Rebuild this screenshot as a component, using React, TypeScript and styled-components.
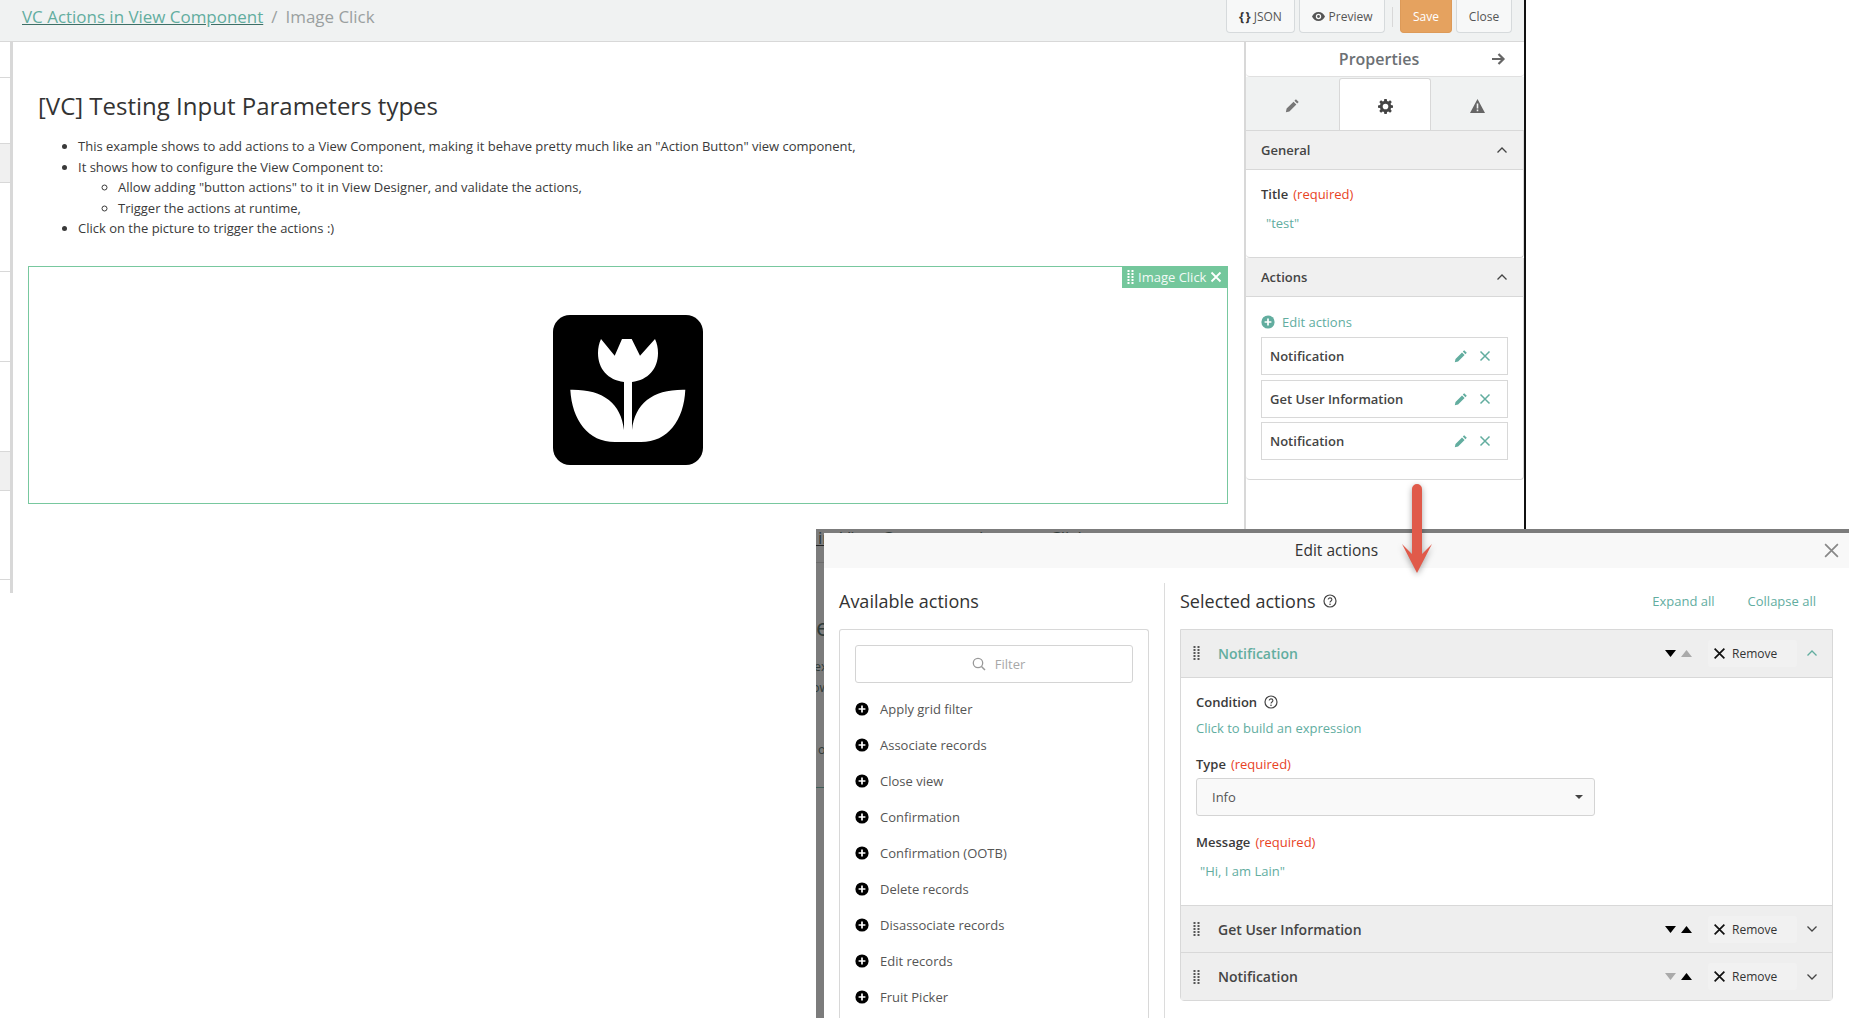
import React from "react";
import styled, { createGlobalStyle } from "styled-components";

const Global = createGlobalStyle`
  html, body { margin: 0; padding: 0; background: #fff; }
  body { font-family: "Open Sans", "Liberation Sans", sans-serif; color: #333; width: 1849px; height: 1018px; overflow: hidden; position: relative; }
  * { box-sizing: border-box; }
`;

const teal = "#62ad9f";
const red = "#e8431f";

const Screen = styled.div`
  width: 1526px;
  height: 593px;
  border-right: 2px solid #111;
  display: flex;
  flex-direction: column;
`;
const Header = styled.header`
  height: 42px;
  flex: none;
  background: #f0f2f2;
  border-bottom: 1px solid #d8d8d8;
  display: flex;
  align-items: flex-start;
  justify-content: space-between;
  padding: 0 12px 0 22px;
`;
const Crumbs = styled.div`
  font-size: 16.95px;
  line-height: 34px;
  color: #9aa0a0;
  display: flex;
  gap: 8px;
`;
const CrumbLink = styled.a`
  color: ${teal};
  text-decoration: underline;
  text-decoration-color: #3d6f66;
`;
const Buttons = styled.div`
  display: flex;
  align-items: center;
  gap: 4px;
  height: 33px;
`;
const Button = styled.button<{ $primary?: boolean; $w: number }>`
  width: ${(p) => p.$w}px;
  height: 33px;
  padding: 0;
  font: 12px "Open Sans", sans-serif;
  color: ${(p) => (p.$primary ? "#fff" : "#555")};
  background: ${(p) => (p.$primary ? "#e5a25f" : "#f7f8f8")};
  border: 1px solid ${(p) => (p.$primary ? "#dd9a58" : "#d6dadc")};
  border-top: none;
  border-radius: 0 0 4px 4px;
  display: flex;
  align-items: center;
  justify-content: center;
  gap: 4px;
`;
const Braces = styled.b`
  letter-spacing: -1px;
  color: #333;
  font-size: 13px;
`;
const Divider = styled.span`
  width: 1px;
  height: 20px;
  background: #d8d8d8;
  margin: 0 3px;
`;
const Body = styled.div`
  flex: 1;
  display: flex;
  min-height: 0;
`;
const RuleStrip = styled.div`
  width: 13px;
  flex: none;
  border-right: 3px solid #d8d8d8;
  display: flex;
  flex-direction: column;
`;
const RuleCell = styled.div<{ $h: number; $fill?: boolean }>`
  height: ${(p) => p.$h}px;
  flex: none;
  border-bottom: 1px solid #d8d8d8;
  background: ${(p) => (p.$fill ? "#f0f0f0" : "transparent")};
`;
const Canvas = styled.main`
  flex: 1;
  min-width: 0;
  padding: 47px 16px 0 15px;
`;
const Title = styled.h1`
  font-size: 24px;
  line-height: 34px;
  font-weight: 400;
  margin: 0 0 13px 10px;
  color: #333;
`;
const Bullets = styled.ul`
  margin: 0 0 0 10px;
  padding: 0 0 0 40px;
  font-size: 13px;
  line-height: 20.6px;
  color: #3a3a3a;
  ul { padding-left: 40px; margin: 0; }
`;
const Frame = styled.section`
  position: relative;
  margin-top: 27px;
  height: 238px;
  border: 1px solid #78c89f;
  display: flex;
  justify-content: center;
  padding-top: 48px;
`;
const Tag = styled.div`
  position: absolute;
  top: -1px;
  right: -1px;
  height: 22px;
  width: 106px;
  background: #74c79c;
  color: #f2faf6;
  font-size: 13px;
  white-space: nowrap;
  display: flex;
  align-items: center;
  gap: 3px;
  padding: 0 6px 0 5px;
`;
const Side = styled.aside`
  width: 280px;
  flex: none;
  border-left: 2px solid #d8d8d8;
  display: flex;
  flex-direction: column;
`;
const SideTitle = styled.div`
  height: 35px;
  display: flex;
  align-items: center;
  justify-content: center;
  position: relative;
  font-size: 16px;
  font-weight: 600;
  color: #6c7074;
  border-bottom: 1px solid #e0e0e0;
  border-radius: 0 0 4px 4px;
  padding-right: 12px;
`;
const SideArrow = styled.span`
  position: absolute;
  right: 18px;
  top: 9px;
  display: flex;
`;
const Tabs = styled.div`
  height: 54px;
  background: #f0f2f2;
  display: flex;
  border-bottom: 1px solid #d8d8d8;
`;
const Tab = styled.div<{ $on?: boolean }>`
  width: ${(p) => (p.$on ? 93 : 93)}px;
  display: flex;
  align-items: center;
  justify-content: center;
  background: ${(p) => (p.$on ? "#fff" : "transparent")};
  border: ${(p) => (p.$on ? "1px solid #d8d8d8" : "none")};
  border-bottom: none;
  border-radius: 3px 3px 0 0;
  margin-top: 1px;
  padding-top: 3px;
`;
const Panel = styled.div`
  border-bottom: 1px solid #d8d8d8;
  border-right: 1px solid #d8d8d8;
  border-radius: 0 0 4px 4px;
`;
const PanelHead = styled.div`
  height: 39px;
  background: #f0f0f0;
  border-bottom: 1px solid #d8d8d8;
  display: flex;
  align-items: center;
  justify-content: space-between;
  padding: 0 15px 0 15px;
  font-size: 13px;
  font-weight: 600;
  color: #444;
`;
const GeneralBody = styled.div`
  height: 87px;
  padding: 14px 15px 0;
`;
const FieldLabel = styled.div`
  font-size: 13px;
  line-height: 20px;
  font-weight: 600;
  color: #3a3a3a;
  display: flex;
  gap: 5px;
  align-items: center;
`;
const Required = styled.span`
  font-weight: 400;
  color: ${red};
`;
const StringValue = styled.div`
  font-size: 13px;
  line-height: 20px;
  color: ${teal};
  margin: 9px 0 0 5px;
`;
const MessageValue = styled(StringValue)`
  margin-top: 10px;
  margin-left: 4px;
`;
const ActionsBody = styled.div`
  padding: 14px 15px 19px;
`;
const EditActions = styled.div`
  display: flex;
  align-items: center;
  gap: 7px;
  height: 22px;
  font-size: 13px;
  color: ${teal};
  margin-bottom: 4px;
`;
const ActionRow = styled.div`
  height: 38px;
  border: 1px solid #d8d8d8;
  margin-bottom: 4.5px;
  padding: 0 16px 0 8px;
  display: flex;
  align-items: center;
  font-size: 13px;
  font-weight: 600;
  color: #444;
  &:last-child { margin-bottom: 0; }
`;
const Name = styled.span`
  flex: 1;
`;
const RowIcons = styled.span`
  display: flex;
  align-items: center;
  gap: 11px;
`;
const Modal = styled.div`
  position: absolute;
  left: 816px;
  top: 529px;
  width: 1033px;
  height: 489px;
  background: #7c7c7c;
  padding: 4px 0 0 8px;
  overflow: hidden;
`;
const GhostText = styled.span<{ $x: number; $y: number; $s: number }>`
  position: absolute;
  left: ${(p) => p.$x}px;
  top: ${(p) => p.$y}px;
  font-size: ${(p) => p.$s}px;
  line-height: 1;
  color: #2f3a38;
  white-space: nowrap;
`;
const GhostLine = styled.span<{ $y: number; $c: string; $w?: number }>`
  position: absolute;
  left: 0;
  top: ${(p) => p.$y}px;
  width: ${(p) => p.$w ?? 8}px;
  height: 1px;
  background: ${(p) => p.$c};
`;
const ModalBox = styled.div`
  position: relative;
  height: 100%;
  background: #fff;
  border-radius: 4px 4px 0 0;
  display: flex;
  flex-direction: column;
`;
const ModalHead = styled.div`
  height: 35px;
  flex: none;
  background: #f8f8f8;
  display: flex;
  align-items: center;
  justify-content: center;
  font-size: 15.5px;
  color: #333;
  padding-bottom: 1px;
  position: relative;
`;
const CloseX = styled.span`
  position: absolute;
  right: 9px;
  top: 9px;
  display: flex;
`;
const ModalBody = styled.div`
  flex: 1;
  display: flex;
  min-height: 0;
  padding-top: 15px;
`;
const LeftCol = styled.div`
  width: 340px;
  flex: none;
  padding-left: 15px;
  display: flex;
  flex-direction: column;
`;
const RightCol = styled.div`
  flex: 1;
  border-left: 1px solid #dcdcdc;
  padding: 0 0 0 15px;
`;
const ColTitle = styled.h2`
  font-size: 18px;
  line-height: 30px;
  height: 30px;
  font-weight: 400;
  margin: 3px 0 13px 0;
  color: #333;
  display: flex;
  align-items: center;
  gap: 7px;
`;
const AvailBox = styled.div`
  width: 310px;
  flex: 1;
  border: 1px solid #d8d8d8;
  border-bottom: none;
  border-radius: 3px 3px 0 0;
  padding: 15px 15px 0;
`;
const FilterBox = styled.div`
  height: 38px;
  border: 1px solid #d4d4d4;
  border-radius: 3px;
  display: flex;
  align-items: center;
  justify-content: center;
  gap: 9px;
  font-size: 13px;
  color: #a8a8a8;
  margin-bottom: 8px;
  padding-left: 9px;
`;
const AvailItem = styled.div`
  height: 36px;
  display: flex;
  align-items: center;
  gap: 11px;
  font-size: 13px;
  color: #555;
`;
const TitleRow = styled.div`
  display: flex;
  justify-content: space-between;
`;
const Links = styled.div`
  display: flex;
  gap: 33px;
  font-size: 13px;
  color: ${teal};
  line-height: 36px;
  padding-right: 33px;
`;
const Accordion = styled.div`
  border: 1px solid #d8d8d8;
  border-radius: 0 0 4px 4px;
  width: 653px;
`;
const AccHead = styled.div<{ $open?: boolean }>`
  height: ${(p) => (p.$open ? 48 : 47)}px;
  background: #eeeeee;
  display: flex;
  align-items: center;
  padding: ${(p) => (p.$open ? "0 14px 1px 12px" : "0 14px 0 12px")};
  border-bottom: 1px solid #d8d8d8;
  &:last-child { border-bottom: none; }
`;
const Grip = styled.span`
  display: flex;
  margin-right: 17px;
`;
const AccTitle = styled.span<{ $open?: boolean }>`
  flex: 1;
  font-size: 14px;
  font-weight: 600;
  color: ${(p) => (p.$open ? teal : "#444")};
`;
const Sort = styled.span`
  display: flex;
  gap: 5px;
  margin-right: 16px;
`;
const Remove = styled.span`
  width: 89px;
  height: 27px;
  background: #f1f1f1;
  border-radius: 3px;
  display: flex;
  align-items: center;
  padding-left: 5px;
  gap: 6px;
  font-size: 12px;
  color: #333;
  margin-right: 9px;
`;
const AccBody = styled.div`
  height: 228px;
  padding: 15px 15px 0;
  border-bottom: 1px solid #d8d8d8;
`;
const FieldLabelSm = styled(FieldLabel)`
  line-height: 18px;
`;
const ConditionLabel = styled(FieldLabelSm)`
  gap: 7px;
`;
const ExprLink = styled.div`
  font-size: 13px;
  line-height: 20px;
  color: ${teal};
  margin: 7px 0 17px;
`;
const SelectBox = styled.div`
  width: 399px;
  height: 38px;
  border: 1px solid #d4d4d4;
  border-radius: 3px;
  background: #f9f9f9;
  margin: 5px 0 17px;
  display: flex;
  align-items: center;
  justify-content: space-between;
  padding: 0 11px 0 15px;
  font-size: 13px;
  color: #555;
`;
const Caret = styled.span`
  width: 0;
  height: 0;
  border-left: 4px solid transparent;
  border-right: 4px solid transparent;
  border-top: 4px solid #444;
`;
const ArrowOverlay = styled.svg`
  position: absolute;
  left: 1402px;
  top: 484px;
  filter: drop-shadow(0 2px 3px rgba(0, 0, 0, 0.35));
`;

const Pencil = ({ c = teal, s = 14 }: { c?: string; s?: number }) => (
  <svg width={s} height={s} viewBox="0 0 14 14"><path d="M10.2 1.2l2.6 2.6-1.4 1.4-2.6-2.6zM8 3.4L10.6 6l-6.5 6.5-3.3.7.7-3.3z" fill={c} /></svg>
);
const Cross = ({ c = teal, s = 12, w = 1.5 }: { c?: string; s?: number; w?: number }) => (
  <svg width={s} height={s} viewBox="0 0 12 12"><path d="M1.5 1.5l9 9M10.5 1.5l-9 9" stroke={c} strokeWidth={w} fill="none" /></svg>
);
const Chevron = ({ up, c = "#444" }: { up?: boolean; c?: string }) => (
  <svg width="12" height="8" viewBox="0 0 12 8"><path d={up ? "M1.5 6.5L6 2l4.5 4.5" : "M1.5 1.5L6 6l4.5-4.5"} stroke={c} strokeWidth="1.3" fill="none" /></svg>
);
const PlusCircle = ({ c = "#000", s = 14 }: { c?: string; s?: number }) => (
  <svg width={s} height={s} viewBox="0 0 14 14"><circle cx="7" cy="7" r="6.6" fill={c} /><path d="M7 3.6v6.8M3.6 7h6.8" stroke="#fff" strokeWidth="1.7" /></svg>
);
const Help = ({ s = 14 }: { s?: number }) => (
  <svg width={s} height={s} viewBox="0 0 14 14"><circle cx="7" cy="7" r="6" stroke="#444" strokeWidth="1.2" fill="none" /><path d="M5.2 5.6c0-2.3 3.7-2.2 3.7 0 0 1.4-1.9 1.4-1.9 3" stroke="#444" strokeWidth="1.1" fill="none" /><circle cx="7" cy="10.3" r=".8" fill="#444" /></svg>
);
const GripDots = ({ c = "#555" }: { c?: string }) => (
  <svg width="8" height="14" viewBox="0 0 8 14" fill={c}>
    {[0, 3, 6, 9, 12].map((y) => (
      <React.Fragment key={y}>
        <rect x="0.5" y={y} width="2" height="2" />
        <rect x="4.5" y={y} width="2" height="2" />
      </React.Fragment>
    ))}
  </svg>
);
const Tri = ({ up, c = "#000" }: { up?: boolean; c?: string }) => (
  <svg width="11" height="7" viewBox="0 0 11 7"><path d={up ? "M5.5 0L11 7H0z" : "M0 0h11L5.5 7z"} fill={c} /></svg>
);

const Row = ({ name }: { name: string }) => (
  <ActionRow>
    <Name>{name}</Name>
    <RowIcons>
      <Pencil />
      <Cross />
    </RowIcons>
  </ActionRow>
);

const Head = ({ name, open, down = true, up = true }: { name: string; open?: boolean; down?: boolean; up?: boolean }) => (
  <AccHead $open={open}>
    <Grip><GripDots /></Grip>
    <AccTitle $open={open}>{name}</AccTitle>
    <Sort>
      <Tri c={down ? "#000" : "#aaa"} />
      <Tri up c={up ? "#000" : "#aaa"} />
    </Sort>
    <Remove><Cross c="#111" w={1.6} s={13} />Remove</Remove>
    <Chevron up={open} c={open ? teal : "#444"} />
  </AccHead>
);

const avail = ["Apply grid filter", "Associate records", "Close view", "Confirmation", "Confirmation (OOTB)", "Delete records", "Disassociate records", "Edit records", "Fruit Picker"];

export default function App() {
  return (
    <>
      <Global />
      <Screen>
        <Header>
          <Crumbs>
            <CrumbLink>VC Actions in View Component</CrumbLink>
            <span>/</span>
            <span>Image Click</span>
          </Crumbs>
          <Buttons>
            <Button $w={69}><Braces>{"{ }"}</Braces>JSON</Button>
            <Button $w={86}>
              <svg width="13" height="9" viewBox="0 0 13 9"><path d="M6.5 0C3.5 0 1.2 2 0 4.5 1.2 7 3.5 9 6.5 9S11.8 7 13 4.5C11.8 2 9.5 0 6.5 0zm0 7.2a2.7 2.7 0 1 1 0-5.4 2.7 2.7 0 0 1 0 5.400z" fill="#555" /><circle cx="6.5" cy="4.5" r="1.4" fill="#555" /></svg>
              Preview
            </Button>
            <Divider />
            <Button $primary $w={52}>Save</Button>
            <Button $w={56}>Close</Button>
          </Buttons>
        </Header>
        <Body>
          <RuleStrip>
            <RuleCell $h={36} />
            <RuleCell $h={66} />
            <RuleCell $h={39} $fill />
            <RuleCell $h={89} />
            <RuleCell $h={90} />
            <RuleCell $h={90} />
            <RuleCell $h={39} $fill />
            <RuleCell $h={89} />
          </RuleStrip>
          <Canvas>
            <Title>[VC] Testing Input Parameters types</Title>
            <Bullets>
              <li>This example shows to add actions to a View Component, making it behave pretty much like an "Action Button" view component,</li>
              <li>It shows how to configure the View Component to:
                <ul>
                  <li>Allow adding "button actions" to it in View Designer, and validate the actions,</li>
                  <li>Trigger the actions at runtime,</li>
                </ul>
              </li>
              <li>Click on the picture to trigger the actions :)</li>
            </Bullets>
            <Frame>
              <Tag>
                <GripDots c="#fff" />
                <Name>Image Click</Name>
                <Cross c="#fff" w={1.8} s={12} />
              </Tag>
              <svg width="150" height="150" viewBox="0 0 150 150">
                <rect width="150" height="150" rx="17" fill="#000" />
                <path fill="#fff" d="M17.3 74.7C50 74 68 88 71 115V67C55 65 45 54 45 38C45 33 46 28 48 24L61.7 40.7L69 24H78.7L87 40.7L102 24C104 28 105 33 105 38C105 54 95 65 79 67V115C82 88 100 74 132.3 74.7C131 105 115 127 88 127H62C35 127 19 105 17.3 74.7Z" />
              </svg>
            </Frame>
          </Canvas>
          <Side>
            <SideTitle>
              Properties
              <SideArrow>
                <svg width="16" height="16" viewBox="0 0 16 16"><path d="M2 8h11M8.5 3l5 5-5 5" stroke="#666" strokeWidth="2.2" fill="none" /></svg>
              </SideArrow>
            </SideTitle>
            <Tabs>
              <Tab><Pencil c="#777" s={15} /></Tab>
              <Tab $on>
                <svg width="15" height="15" viewBox="0 0 16 16"><path fillRule="evenodd" fill="#444" d="M6.7 0h2.6l.4 2.2 1.300.5L12.900 1.400l1.800 1.800-1.300 1.900.5 1.300L16 6.800v2.500l-2.100.4-.5 1.300 1.300 1.900-1.800 1.800-1.900-1.300-1.300.5-.4 2.100H6.800l-.4-2.100-1.300-.5-1.900 1.300-1.800-1.800 1.300-1.900-.5-1.300L0 9.300V6.800l2.200-.4.500-1.300L1.400 3.200l1.800-1.800 1.900 1.300 1.300-.5zM8 5a3 3 0 1 0 0 6 3 3 0 0 0 0-6z" /></svg>
              </Tab>
              <Tab>
                <svg width="15" height="14" viewBox="0 0 15 14"><path fillRule="evenodd" fill="#666" d="M7.5 0L15 14H0zM6.7 4.5v5h1.600v-5zM6.7 10.500v1.700h1.600v-1.700z" /></svg>
              </Tab>
            </Tabs>
            <Panel>
              <PanelHead>General<Chevron up /></PanelHead>
              <GeneralBody>
                <FieldLabel>Title <Required>(required)</Required></FieldLabel>
                <StringValue>"test"</StringValue>
              </GeneralBody>
            </Panel>
            <Panel>
              <PanelHead>Actions<Chevron up /></PanelHead>
              <ActionsBody>
                <EditActions><PlusCircle c={teal} />Edit actions</EditActions>
                <Row name="Notification" />
                <Row name="Get User Information" />
                <Row name="Notification" />
              </ActionsBody>
            </Panel>
          </Side>
        </Body>
      </Screen>

      <Modal>
        <GhostText $x={2} $y={0} $s={17}>in</GhostText>
        <GhostText $x={24} $y={0} $s={17}>View</GhostText>
        <GhostText $x={66} $y={0} $s={17}>C</GhostText>
        <GhostText $x={160} $y={0} $s={17}>/</GhostText>
        <GhostText $x={234} $y={0} $s={17}>Click</GhostText>
        <GhostLine $y={16} $c="#222" />
        <GhostLine $y={33} $c="#6c6c6c" />
        <GhostText $x={0} $y={86} $s={24}>e</GhostText>
        <GhostText $x={-2} $y={132} $s={12.5}>ex</GhostText>
        <GhostText $x={-4} $y={153} $s={12.5}>ow</GhostText>
        <GhostText $x={2} $y={215} $s={12.5}>o</GhostText>
        <GhostLine $y={258} $c="#3f5e58" />
        <ModalBox>
          <ModalHead>
            Edit actions
            <CloseX><Cross c="#888" s={17} w={1.2} /></CloseX>
          </ModalHead>
          <ModalBody>
            <LeftCol>
              <ColTitle>Available actions</ColTitle>
              <AvailBox>
                <FilterBox>
                  <svg width="14" height="14" viewBox="0 0 14 14"><circle cx="6" cy="6" r="4.7" stroke="#999" strokeWidth="1.3" fill="none" /><path d="M9.5 9.5L13 13" stroke="#999" strokeWidth="1.5" /></svg>
                  Filter
                </FilterBox>
                {avail.map((a) => (
                  <AvailItem key={a}><PlusCircle />{a}</AvailItem>
                ))}
              </AvailBox>
            </LeftCol>
            <RightCol>
              <TitleRow>
                <ColTitle>Selected actions <Help /></ColTitle>
                <Links><span>Expand all</span><span>Collapse all</span></Links>
              </TitleRow>
              <Accordion>
                <Head name="Notification" open up={false} />
                <AccBody>
                  <ConditionLabel>Condition <Help /></ConditionLabel>
                  <ExprLink>Click to build an expression</ExprLink>
                  <FieldLabelSm>Type <Required>(required)</Required></FieldLabelSm>
                  <SelectBox>Info<Caret /></SelectBox>
                  <FieldLabelSm>Message <Required>(required)</Required></FieldLabelSm>
                  <MessageValue>"Hi, I am Lain"</MessageValue>
                </AccBody>
                <Head name="Get User Information" />
                <Head name="Notification" down={false} />
              </Accordion>
            </RightCol>
          </ModalBody>
        </ModalBox>
      </Modal>

      <ArrowOverlay width="30" height="90" viewBox="0 0 30 90">
        <path d="M10 5a5 5 0 0 1 10 0v65l10-10-15 29L0 60l10 10z" fill="#e05a4a" />
      </ArrowOverlay>
    </>
  );
}
